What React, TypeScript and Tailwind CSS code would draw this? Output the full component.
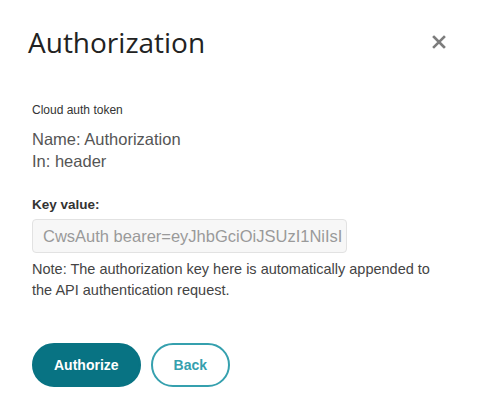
import React from "react";

export default function App() {
  return (
    <div className="w-[486px] h-[413px] bg-white overflow-hidden font-['Liberation_Sans',Arial,sans-serif]">
      <div className="flex items-center justify-between pl-[28px] pr-[40px] pt-[24px]">
        <h1 className="font-['Open_Sans','Noto_Sans',sans-serif] text-[28px] leading-[36px] text-[#222] font-normal">
          Authorization
        </h1>
        <button className="w-[14px] h-[14px] flex items-center justify-center" aria-label="Close">
          <svg width="14" height="14" viewBox="0 0 14 14">
            <path d="M2 2 L12 12 M12 2 L2 12" stroke="#7d7d7d" strokeWidth="2.6" strokeLinecap="square" />
          </svg>
        </button>
      </div>

      <div className="px-8">
        <div className="mt-[42px] text-[12px] leading-[16px] text-[#333]">Cloud auth token</div>
        <div className="mt-[10px] text-[16.5px] leading-[22px] text-[#555]">Name: Authorization</div>
        <div className="text-[16.5px] leading-[22px] text-[#555]">In: header</div>

        <div className="mt-[23px] text-[13.5px] leading-[20px] font-bold text-[#333]">Key value:</div>
        <div className="mt-[4px] w-[315px] h-[34px] rounded-[4px] border border-[#e2e2e2] bg-[#f7f7f7] overflow-hidden flex items-center px-[10px]">
          <span className="whitespace-nowrap text-[16.5px] text-[#9a9a9a]">
            CwsAuth bearer=eyJhbGciOiJSUzI1NiIsI
          </span>
        </div>

        <p className="mt-[6px] text-[14.5px] leading-[21px] text-[#444] w-[420px]">
          Note: The authorization key here is automatically appended to the API authentication request.
        </p>

        <div className="mt-[42px] flex gap-[10px]">
          <button className="h-[44px] px-[20px] rounded-full border-2 border-[#087383] bg-[#087383] text-white text-[14px] font-bold">
            Authorize
          </button>
          <button className="h-[44px] px-[21px] rounded-full border-2 border-[#35a0ae] bg-white text-[#35a0ae] text-[14px] font-bold">
            Back
          </button>
        </div>
      </div>
    </div>
  );
}
